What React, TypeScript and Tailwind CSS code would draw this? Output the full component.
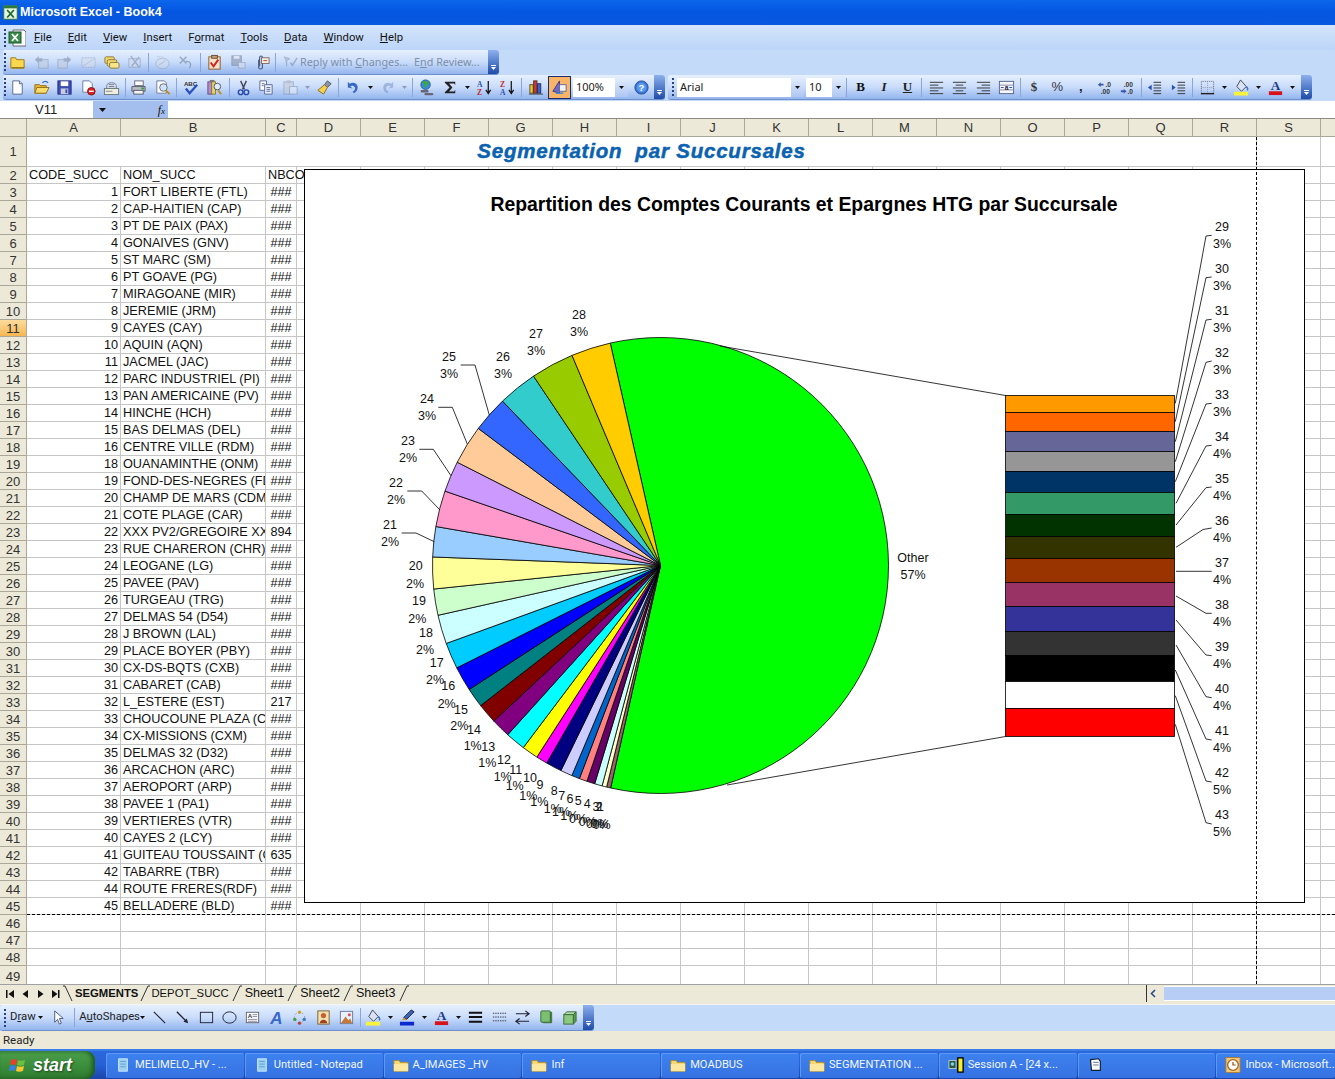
import React from "react";

const T = "font-['Noto_Sans',sans-serif]";
const R2 = "font-['Roboto',sans-serif]";

const icons: Record<string, React.ReactNode> = {
  folder: <><path d="M2 4h5l1 2h8v9H2z" fill="#f9d84e" stroke="#9a7a18" /><path d="M3 14h13v1H3z" fill="#8a6a10" /></>,
  reply: <g opacity=".6"><rect x="6" y="6" width="10" height="9" fill="#c3cde0" stroke="#8c9ab5" /><path d="M2 6l4-4v2.500h4v3.500H6v2z" fill="#7f8fae" /></g>,
  fwd: <g opacity=".6"><rect x="2" y="6" width="10" height="9" fill="#c3cde0" stroke="#8c9ab5" /><path d="M16 6l-4-4v2.500H8V8h4v2z" fill="#7f8fae" /></g>,
  mailg: <g opacity=".55"><rect x="2" y="4" width="14" height="10" fill="#d5dcea" stroke="#8c9ab5" strokeDasharray="2 1" /><path d="M3 13L15 5" stroke="#a5b0c5" /></g>,
  stack: <><rect x="2" y="3" width="10" height="7" rx="1.500" fill="#f3d76a" stroke="#8a7a40" /><rect x="4.500" y="6" width="10" height="7" rx="1.500" fill="#f3d76a" stroke="#8a7a40" /><rect x="7" y="9" width="10" height="6" rx="1.500" fill="#f7e48a" stroke="#8a7a40" /></>,
  xdoc: <g opacity=".6"><rect x="3" y="5" width="12" height="9" fill="#d5dcea" stroke="#8c9ab5" /><path d="M5 2l9 12M14 3L6 13" stroke="#7f8fae" strokeWidth="1.500" /></g>,
  circleg: <g opacity=".5"><path d="M3 3h8" stroke="#8c9ab5" strokeDasharray="1 1" /><ellipse cx="9" cy="10" rx="7" ry="5.500" fill="#d5dcea" stroke="#8c9ab5" /><path d="M5 12l7-5" stroke="#8c9ab5" /></g>,
  xarrow: <g opacity=".55"><path d="M3 3l7 7M10 3l-7 7" stroke="#6a7a9a" strokeWidth="1.600" /><path d="M9 8c5-1 7 3 4 7" fill="none" stroke="#6a7a9a" strokeWidth="1.300" /></g>,
  clip: <><rect x="3" y="3" width="12" height="13" fill="#f3e3c8" stroke="#8a5a30" /><rect x="6" y="1.500" width="6" height="3" fill="#c8a070" stroke="#6a4a30" /><path d="M5 9l3 4 5-7" fill="none" stroke="#d02020" strokeWidth="2" /></>,
  saveg: <g opacity=".6"><rect x="2" y="2" width="10" height="10" fill="#8a94ab" stroke="#6a7a9a" /><rect x="4" y="2" width="6" height="3" fill="#e4e8f0" /><rect x="9" y="9" width="7" height="6" fill="#d5dcea" stroke="#8c9ab5" /></g>,
  pclip: <><path d="M6 6v8c0 2.500 4 2.500 4 0V4C10 1.500 7 1.500 7 4v9" fill="none" stroke="#4a5a7a" strokeWidth="1.200" /><rect x="9" y="4" width="8" height="6" fill="#f5f2e0" stroke="#7a6a6a" /><path d="M11 7h4" stroke="#d03030" /></>,
  flag: <g opacity=".6"><path d="M2 3l6 2-3 2v6" fill="#a5b0c5" stroke="#7f8fae" /><path d="M9 9l2 3 5-8" fill="none" stroke="#7f8fae" strokeWidth="1.500" /></g>,
  newdoc: <><path d="M4 2h7l3 3v11H4z" fill="#fff" stroke="#55688f" /><path d="M11 2v3h3" fill="#dde" stroke="#55688f" /></>,
  open: <><path d="M2 6h5l1 1h6v8H2z" fill="#e8b830" stroke="#94701a" /><path d="M4 9h13l-3 6H2z" fill="#f9dc70" stroke="#94701a" /><path d="M10 4c2-2 4-2 6 0" fill="none" stroke="#3a6ac8" strokeWidth="1.300" /></>,
  save: <><rect x="2" y="2" width="14" height="14" fill="#3d4db0" stroke="#232f80" /><rect x="5" y="2.500" width="8" height="5" fill="#fff" /><rect x="5" y="10" width="8" height="6" fill="#c8cce0" /><rect x="10" y="11" width="2" height="4" fill="#3d4db0" /></>,
  perm: <><path d="M3 2h7l3 3v9H3z" fill="#fff" stroke="#6a7a9a" /><circle cx="12" cy="13" r="4" fill="#d22" stroke="#811" /><path d="M9.500 13h5" stroke="#fff" strokeWidth="1.500" /></>,
  email: <><path d="M4 7c0-4 10-4 10 0v3H4z" fill="#e4e8f0" stroke="#6a7a9a" /><path d="M6 6h6M6 8h6" stroke="#6a7a9a" /><rect x="1.500" y="10" width="15" height="6.500" fill="#f0ece0" stroke="#6a7a7a" /><path d="M3 13h7" stroke="#888" /></>,
  print: <><rect x="5" y="2" width="9" height="5" fill="#fff" stroke="#6a6a7a" /><path d="M2 8h14v5H2z" fill="#b8bcc8" stroke="#5a5a6a" /><rect x="12" y="9" width="3" height="2" fill="#3aa040" /><rect x="4" y="12" width="10" height="4" fill="#f5f5f5" stroke="#5a5a6a" /></>,
  prev: <><path d="M3 2h8l2 2v11H3z" fill="#fff" stroke="#6a7a9a" /><circle cx="10" cy="9" r="4" fill="#cfe3ff" stroke="#6a6a6a" /><path d="M12.500 12l4 4" stroke="#c08820" strokeWidth="2" /></>,
  spell: <><text x="1" y="7" fontSize="6.500" fontWeight="bold" fontFamily="Liberation Sans" fill="#333">ABC</text><path d="M3 10l4 5 8-9" fill="none" stroke="#2a50c0" strokeWidth="2.400" /></>,
  research: <><rect x="2" y="3" width="4" height="13" fill="#b48ad0" stroke="#6a4a8a" /><rect x="6" y="3" width="4" height="13" fill="#e6d56a" stroke="#8a7a30" /><circle cx="12" cy="8" r="3.500" fill="#dfeeff" stroke="#555" /><path d="M13 12l3 4" stroke="#c09020" strokeWidth="2" /><rect x="4" y="1" width="5" height="2" fill="#777" /></>,
  cut: <><path d="M6 2l4 9M12 2L8 11" stroke="#445" strokeWidth="1.500" /><circle cx="6" cy="14" r="2.500" fill="none" stroke="#2848a8" strokeWidth="1.500" /><circle cx="12" cy="14" r="2.500" fill="none" stroke="#2848a8" strokeWidth="1.500" /></>,
  copy: <><path d="M2 2h7v10H2z" fill="#fff" stroke="#5a6a9a" /><path d="M7 6h8v10H7z" fill="#e8eefc" stroke="#5a6a9a" /><path d="M9 9h4M9 11h4M9 13h4M4 5h3M4 7h2" stroke="#5a6a9a" /></>,
  paste: <g opacity=".55"><rect x="2" y="3" width="10" height="13" fill="#c7cbd5" stroke="#7f8fae" /><rect x="5" y="1.500" width="4" height="3" fill="#9aa3b8" /><rect x="8" y="8" width="8" height="8" fill="#e8edf6" stroke="#7f8fae" /></g>,
  brush: <><path d="M12 2l4 3-4 4-3-3z" fill="#8a94ab" stroke="#556" /><path d="M9 6l3 3-4 7-6-4z" fill="#f5cf4f" stroke="#8a7020" /></>,
  undo: <path d="M3 9V3l2 2c5-3 10 1 8 6-.6 2-2 3-3.500 4l-1.500-1.500c2-1 3-2.500 2.500-4.500-.8-2-3.500-2.500-5-1.200L8 10z" fill="#3668c8" />,
  redo: <g opacity=".35"><path d="M15 9V3l-2 2C8 2 3 6 5 11c.6 2 2 3 3.500 4l1.500-1.500c-2-1-3-2.500-2.500-4.500.8-2 3.500-2.500 5-1.200L10 10z" fill="#4a6aa8" /></g>,
  link: <><circle cx="8" cy="6" r="5" fill="#3a8ad8" stroke="#2a5a90" /><path d="M4 4c2 0 3 2 2 4s3 1 3-1 3-1 3-3c-2-2-5-3-8 0z" fill="#3aa848" /><path d="M4 13h6M8 16h7" stroke="#667" strokeWidth="2.500" strokeLinecap="round" /></>,
  sigma: <path d="M3 3h11v3.500l-1-1.800H7.500L11 9l-3.500 4.200H13l1-1.800V15H3v-1l5-5-5-5z" fill="#222" />,
  az: <><text x="1" y="8" fontSize="8" fontWeight="bold" fontFamily="Liberation Serif" fill="#2c52b0">A</text><text x="1" y="16.500" fontSize="8" fontWeight="bold" fontFamily="Liberation Serif" fill="#c02828">Z</text><path d="M13 2v12M10.500 11.500l2.500 4 2.500-4" fill="none" stroke="#111" strokeWidth="1.300" /></>,
  za: <><text x="1" y="8" fontSize="8" fontWeight="bold" fontFamily="Liberation Serif" fill="#c02828">Z</text><text x="1" y="16.500" fontSize="8" fontWeight="bold" fontFamily="Liberation Serif" fill="#2c52b0">A</text><path d="M13 2v12M10.500 11.500l2.500 4 2.500-4" fill="none" stroke="#111" strokeWidth="1.300" /></>,
  chart: <><rect x="2" y="6" width="3.500" height="9" fill="#e8c830" stroke="#5a5030" /><rect x="6" y="2" width="3.500" height="13" fill="#cc3a30" stroke="#5a2a20" /><rect x="10" y="5" width="3.500" height="10" fill="#4060c0" stroke="#203070" /><path d="M1 16h15" stroke="#444" /></>,
  drawsel: <><path d="M2 13L9 2v13z" fill="#7068c8" stroke="#403a88" /><rect x="9" y="6" width="7" height="7" fill="#f3f3f8" stroke="#6a6a8a" /><path d="M5 15h8" stroke="#3a8ad8" strokeWidth="1.500" /></>,
  help: <><circle cx="9" cy="9" r="7" fill="#3a78d8" stroke="#2a4f9a" /><circle cx="9" cy="9" r="5" fill="#5c9af0" /><text x="9" y="12.500" textAnchor="middle" fontSize="10" fontWeight="bold" fontFamily="Liberation Sans" fill="#fff">?</text></>,
  al: <path d="M2 3.500h14M2 6.500h9M2 9.500h14M2 12.500h9M2 15.500h14" stroke="#333" />,
  ac: <path d="M2 3.500h14M5 6.500h8M2 9.500h14M5 12.500h8M2 15.500h14" stroke="#333" />,
  ar: <path d="M2 3.500h14M7 6.500h9M2 9.500h14M7 12.500h9M2 15.500h14" stroke="#333" />,
  merge: <><rect x="1.500" y="2.500" width="15" height="13" fill="#f5f7fc" stroke="#55688f" /><path d="M1.500 6.500h15M1.500 11.500h15" stroke="#88a" /><text x="9" y="12" textAnchor="middle" fontSize="7" fontWeight="bold" fontFamily="Liberation Sans" fill="#223">a</text><path d="M3 9h3M12 9h3" stroke="#2a4fa8" /></>,
  incd: <><path d="M2 6l3-2.500V5h3v2H5v1.500z" fill="#3a5aa8" /><text x="10" y="8" fontSize="7" fontWeight="bold" fontFamily="Liberation Sans" fill="#333">.0</text><text x="5" y="16" fontSize="7" fontWeight="bold" fontFamily="Liberation Sans" fill="#333">.00</text></>,
  decd: <><text x="5" y="8" fontSize="7" fontWeight="bold" fontFamily="Liberation Sans" fill="#333">.00</text><path d="M8 13l-3-2.500V12H2v2h3v1.500z" fill="#3a5aa8" /><text x="9" y="16" fontSize="7" fontWeight="bold" fontFamily="Liberation Sans" fill="#333">.0</text></>,
  outd: <><path d="M8 3.500h8M8 6.500h8M8 9.500h8M8 12.500h8M8 15.500h8" stroke="#333" /><path d="M6 6v6L2 9z" fill="#2a50b0" /></>,
  ind: <><path d="M8 3.500h8M8 6.500h8M8 9.500h8M8 12.500h8M8 15.500h8" stroke="#333" /><path d="M2 6v6l4-3z" fill="#2a50b0" /></>,
  border: <><rect x="2.500" y="2.500" width="13" height="13" fill="none" stroke="#667" strokeDasharray="1 1" /><path d="M2.500 9h13M9 2.500v13" stroke="#99a" strokeDasharray="1 1" /><path d="M2 15.500h14" stroke="#222" strokeWidth="1.500" /></>,
  fill: <><path d="M8 1l6 7-5 5-5-5z" fill="#d9e3f5" stroke="#445" /><path d="M14 8c2 2 2 3 1 4" stroke="#3a70c0" fill="none" strokeWidth="1.500" /><rect x="1" y="13.500" width="15" height="4" fill="#f7f33a" /></>,
  fcolor: <><text x="9" y="12" textAnchor="middle" fontSize="14" fontWeight="bold" fontFamily="Liberation Serif" fill="#1d3a8a">A</text><rect x="2" y="13" width="14" height="4" fill="#d8121a" /></>,
  lcolor: <><path d="M13 1l3 2-8 8-3-2z" fill="#3a66c0" stroke="#223" /><path d="M3 12l2-3 3 2z" fill="#d09030" /><rect x="1" y="13.500" width="15" height="4" fill="#0a2ad0" /></>,
  cursor: <path d="M5 2v12l3-3 2 5 2-1-2-5h4z" fill="#fff" stroke="#4a5a7a" />,
  line: <path d="M3 3l12 12" stroke="#223" strokeWidth="1.200" />,
  arrowl: <><path d="M3 3l10 10" stroke="#223" strokeWidth="1.400" /><path d="M15 15l-5-1.500 3.500-3.500z" fill="#223" /></>,
  rect: <rect x="2.500" y="3.500" width="13" height="11" fill="none" stroke="#223" />,
  oval: <ellipse cx="9" cy="9" rx="7" ry="6" fill="none" stroke="#223" />,
  textbox: <><rect x="2.500" y="3.500" width="13" height="11" fill="#fff" stroke="#667" /><text x="4" y="10" fontSize="6.500" fontWeight="bold" fontFamily="Liberation Sans" fill="#334">A</text><path d="M9 6h5M9 8h5M4 11h10M4 13h10" stroke="#889" /></>,
  wordart: <text x="9" y="16" textAnchor="middle" fontSize="18" fontWeight="bold" fontStyle="italic" fontFamily="Liberation Sans" fill="#3a68c8">A</text>,
  diagram: <><circle cx="9" cy="9" r="5.500" fill="none" stroke="#99a" strokeDasharray="2 2" /><circle cx="9" cy="3.500" r="1.800" fill="#c8a030" /><circle cx="14" cy="11" r="1.800" fill="#3a78c8" /><circle cx="4" cy="11" r="1.800" fill="#4a9a48" /><circle cx="9" cy="15" r="1.800" fill="#b84040" /></>,
  clipart: <><rect x="3" y="2" width="12" height="14" fill="#f2e2b0" stroke="#7a6030" /><circle cx="9" cy="7" r="2.800" fill="#c86030" /><path d="M5 15c0-5 8-5 8 0z" fill="#a04020" /></>,
  picture: <><rect x="2.500" y="2.500" width="13" height="13" fill="#e8f0fa" stroke="#6a7a9a" /><path d="M3 15l5-7 3 4 2-2 2 5z" fill="#c87838" /><circle cx="12" cy="6" r="1.600" fill="#e05050" /></>,
  lstyle: <path d="M2 4h14M2 8.500h14M2 13.500h14" stroke="#111" strokeWidth="2.200" />,
  dash: <path d="M2 4.500h14M2 8.500h14M2 12.500h14" stroke="#334" strokeDasharray="1.500 1" />,
  arrowst: <path d="M2 5h13M12 2l4 3-4 3M16 13H3M6 10l-4 3 4 3" fill="none" stroke="#223" strokeWidth="1.200" />,
  shadow: <><rect x="5" y="3" width="10" height="12" rx="1" fill="#4a7a4a" /><rect x="3" y="2" width="10" height="12" rx="1" fill="#7ac070" stroke="#3a6a3a" /></>,
  box3d: <><path d="M3 6l3-3h10l-3 3z" fill="#b8dca8" stroke="#3a6a3a" /><path d="M13 6l3-3v10l-3 3z" fill="#5a9a50" stroke="#3a6a3a" /><rect x="3" y="6" width="10" height="10" fill="#8cc880" stroke="#3a6a3a" /></>,
  xlsmall: <><rect x="1" y="1" width="16" height="16" fill="#e8f6e0" stroke="#2e7a3a" /><rect x="1" y="1" width="16" height="3" fill="#2e7a3a" /><path d="M5 6l8 9M13 6l-8 9" stroke="#1d6a30" strokeWidth="2.200" /></>,
  xlmenu: <><path d="M5 1h11l2 2v14H5z" fill="#fff" stroke="#667" /><rect x="1" y="3" width="12" height="11" fill="#3a8a4a" stroke="#1a5a2a" /><path d="M4 5l6 7M10 5l-6 7" stroke="#fff" strokeWidth="1.800" /></>,
  notepad: <><path d="M4 2h10v14H4z" fill="#9bd0f0" stroke="#cfe8ff" /><path d="M6 5h6M6 8h6M6 11h6" stroke="#5a9ad0" /></>,
  foldert: <><path d="M1 4h6l1 2h9v10H1z" fill="#f8d873" stroke="#a98a30" /><path d="M1 8h16v8H1z" fill="#fbe8a0" /></>,
  session: <><rect x="1" y="4" width="8" height="9" fill="#2a5a3a" stroke="#bcd" /><circle cx="5" cy="8" r="2" fill="#7ad0f0" /><rect x="11" y="1" width="6" height="16" fill="#f5ee30" stroke="#000" strokeWidth="1.500" /></>,
  blank: <><path d="M4 3l9-1 2 3v10H5z" fill="#fff" stroke="#123" strokeWidth="1.300" /><path d="M7 6h6M7 9h6" stroke="#567" /></>,
  inbox: <><rect x="1" y="0.500" width="16" height="17" rx="1" fill="#f0c878" stroke="#a87830" /><circle cx="9" cy="9" r="6" fill="#fff" stroke="#a86820" strokeWidth="1.500" /><path d="M9 5.500V9h3" fill="none" stroke="#a05010" strokeWidth="1.400" /></>,
};

const Ic = ({ n, s = 18 }: { n: string; s?: number }) => (
  <svg width={s} height={s} viewBox="0 0 18 18" className="shrink-0">{icons[n]}</svg>
);

const Tool = ({ n }: { n: string }) => (
  <div className="flex h-full w-[23.4px] shrink-0 items-center justify-center"><Ic n={n} s={17} /></div>
);
const Tx = ({ c, cn = "" }: { c: string; cn?: string }) => (
  <div className={`flex h-full w-[23.4px] shrink-0 items-center justify-center text-[13px] ${cn}`}>{c}</div>
);
const Sep = ({ narrow }: { narrow?: boolean }) => (
  <div className={`flex h-full shrink-0 items-center justify-center ${narrow ? "w-[4px]" : "w-[5.500px]"}`}><div className="h-[19px] w-px bg-[#8aa6d8]" /></div>
);
const Arr = ({ g }: { g?: boolean }) => (
  <div className="flex h-full w-[10.600px] shrink-0 items-center justify-center">
    <svg width="5" height="3" viewBox="0 0 5 3"><path d="M0 0h5L2.500 3z" fill={g ? "#8b9cb8" : "#111"} /></svg>
  </div>
);
const Grip = () => (
  <div className="flex h-full w-[3.300px] shrink-0 flex-col items-center justify-center gap-[2px]">
    {[0, 1, 2, 3, 4].map((i) => <div key={i} className="h-[2px] w-[2px] bg-[#27417a]" />)}
  </div>
);
const Chev = () => (
  <div className="flex h-full w-[11px] shrink-0 flex-col items-center justify-end rounded-r-[3px] bg-linear-to-b from-[#8db0ee] to-[#1f4ca8] pb-[4px]">
    <div className="mb-[1px] h-px w-[5px] bg-white" />
    <svg width="5" height="3" viewBox="0 0 5 3"><path d="M0 0h5L2.500 3z" fill="#fff" /></svg>
  </div>
);
const bandCls = "flex items-center rounded-[3px] border-b border-[#6f8fcb] bg-linear-to-b from-[#e6f0fe] via-[#c9dcfa] to-[#94b5ee]";

const Combo = ({ w, text, arrowW = 13 }: { w: string; text: string; arrowW?: number }) => (
  <div className={`flex h-[19px] shrink-0 items-center justify-between bg-white pl-[3px] text-[11px] text-[#222] ${w} ${T}`}>
    <span>{text}</span>
    <div style={{ width: arrowW }} className="flex h-full items-center justify-center bg-linear-to-b from-[#e2ecfd] to-[#adc6f2]">
      <svg width="5" height="3" viewBox="0 0 5 3"><path d="M0 0h5L2.500 3z" fill="#111" /></svg>
    </div>
  </div>
);

const MENU = [
  ["F", "ile"], ["E", "dit"], ["V", "iew"], ["I", "nsert"], ["", "Format"], ["T", "ools"], ["D", "ata"], ["W", "indow"], ["H", "elp"],
];

const rowsData: [string, string, string][] = [
  ["1", "FORT LIBERTE (FTL)", "###"], ["2", "CAP-HAITIEN (CAP)", "###"], ["3", "PT DE PAIX (PAX)", "###"], ["4", "GONAIVES (GNV)", "###"],
  ["5", "ST MARC (SM)", "###"], ["6", "PT GOAVE (PG)", "###"], ["7", "MIRAGOANE (MIR)", "###"], ["8", "JEREMIE (JRM)", "###"],
  ["9", "CAYES (CAY)", "###"], ["10", "AQUIN (AQN)", "###"], ["11", "JACMEL (JAC)", "###"], ["12", "PARC INDUSTRIEL (PI)", "###"],
  ["13", "PAN AMERICAINE (PV)", "###"], ["14", "HINCHE (HCH)", "###"], ["15", "BAS DELMAS (DEL)", "###"], ["16", "CENTRE VILLE (RDM)", "###"],
  ["18", "OUANAMINTHE (ONM)", "###"], ["19", "FOND-DES-NEGRES (FDN)", "###"], ["20", "CHAMP DE MARS (CDM)", "###"], ["21", "COTE PLAGE (CAR)", "###"],
  ["22", "XXX PV2/GREGOIRE XXX", "894"], ["23", "RUE CHARERON (CHR)", "###"], ["24", "LEOGANE (LG)", "###"], ["25", "PAVEE (PAV)", "###"],
  ["26", "TURGEAU (TRG)", "###"], ["27", "DELMAS 54 (D54)", "###"], ["28", "J BROWN (LAL)", "###"], ["29", "PLACE BOYER (PBY)", "###"],
  ["30", "CX-DS-BQTS (CXB)", "###"], ["31", "CABARET (CAB)", "###"], ["32", "L_ESTERE (EST)", "217"], ["33", "CHOUCOUNE PLAZA (CHP)", "###"],
  ["34", "CX-MISSIONS (CXM)", "###"], ["35", "DELMAS 32 (D32)", "###"], ["36", "ARCACHON (ARC)", "###"], ["37", "AEROPORT (ARP)", "###"],
  ["38", "PAVEE 1 (PA1)", "###"], ["39", "VERTIERES (VTR)", "###"], ["40", "CAYES 2 (LCY)", "###"], ["41", "GUITEAU TOUSSAINT (GTS)", "635"],
  ["42", "TABARRE (TBR)", "###"], ["44", "ROUTE FRERES(RDF)", "###"], ["45", "BELLADERE (BLD)", "###"],
];

const LETTERS = "DEFGHIJKLMNOPQRS".split("");
const hdr = "flex items-center justify-center border-r border-b border-[#aca899] bg-[#ece9d8] pt-px text-[13px] text-[#333]";
const cell = "overflow-hidden whitespace-nowrap border-r border-b border-[#c6c6c6] text-[12.700px] leading-[17px] text-[#111]";

const emptyCells = (k: number) => LETTERS.concat("T").map((l) => <div key={k + l} className={cell} />);

const Sheet = () => {
  const rows: React.ReactNode[] = [];
  for (const [i, r] of rowsData.entries()) {
    const n = i + 3;
    rows.push(
      <div key={"h" + n} className={n === 11 ? "flex items-center justify-center border-r border-b border-[#aca899] bg-linear-to-b from-[#fcdc9c] to-[#f6b650] pt-px text-[13px] text-[#333]" : hdr}>{n}</div>,
      <div key={"a" + n} className={`${cell} pr-[2px] text-right`}>{r[0]}</div>,
      <div key={"b" + n} className={`${cell} pl-[2px]`}>{r[1]}</div>,
      <div key={"c" + n} className={`${cell} text-center`}>{r[2]}</div>,
      ...emptyCells(n),
    );
  }
  for (const n of [46, 47, 48, 49]) {
    rows.push(
      <div key={"h" + n} className={hdr}>{n}</div>,
      <div key={"a" + n} className={cell} />, <div key={"b" + n} className={cell} />, <div key={"c" + n} className={cell} />,
      ...emptyCells(n),
    );
  }
  return (
    <div className="grid h-full grid-cols-[27px_94px_145px_31px_repeat(17,64px)] grid-rows-[18px_30px_repeat(47,17px)]">
      <div className={hdr} />
      {["A", "B", "C"].concat(LETTERS).map((l) => <div key={l} className={hdr}>{l}</div>)}
      <div className={hdr} />
      <div className={hdr}>1</div>
      <div className="col-span-18 flex items-center justify-center border-r border-b border-[#c6c6c6]">
        <span className="whitespace-pre text-[20.500px] font-bold italic tracking-[0.800px] text-[#0a62b0] [-webkit-text-stroke:0.5px_#0a62b0]">Segmentation  par Succursales</span>
      </div>
      <div className={cell} /><div className={cell} />
      <div className={hdr}>2</div>
      <div className={`${cell} pl-[2px]`}>CODE_SUCC</div>
      <div className={`${cell} pl-[2px]`}>NOM_SUCC</div>
      <div className="whitespace-nowrap border-r border-b border-[#c6c6c6] pl-[2px] text-[12.700px] leading-[17px] text-[#111]">NBCO</div>
      {emptyCells(2)}
      {rows}
    </div>
  );
};

const CX = 660.5;
const CY = 565.5;
const R = 228;
const boundaries: [number, number][] = [
  [610.7, 345], [573, 357.7], [535, 378.3], [504.3, 403], [480, 429.7], [459.3, 463.3], [446.7, 491.7], [437, 526.7], [433.3, 557],
  [434.3, 589], [439.3, 615], [448.3, 642.7], [459, 666.7], [471, 688.3], [482.3, 704.3], [495.7, 719.3], [509, 733.3], [524, 746.7],
  [537.7, 755.7], [547.7, 761.3], [561.7, 769], [572.7, 773.5], [580, 777], [587.3, 780], [595, 782.8], [602.3, 785], [606.7, 786.7], [610.7, 787.8],
];
const sliceColors = [
  "#ffcc00", "#99cc00", "#33cccc", "#3366ff", "#ffcc99", "#cc99ff", "#ff99cc", "#99ccff", "#ffff99", "#ccffcc", "#ccffff", "#00ccff", "#0000ff",
  "#008080", "#800000", "#800080", "#00ffff", "#ffff00", "#ff00ff", "#000080", "#ccccff", "#0066cc", "#ff8080", "#660066", "#ccffff", "#ffffcc", "#996666",
];
const onCircle = ([x, y]: [number, number]) => {
  const a = Math.atan2(y - CY, x - CX);
  return [CX + R * Math.cos(a), CY + R * Math.sin(a)];
};
const pts = boundaries.map(onCircle);
const f = (v: number) => v.toFixed(2);

const barSegs: [number, number, string][] = [
  [395.5, 412.5, "#ff9900"], [412.5, 431.5, "#ff6600"], [431.5, 451.5, "#666699"], [451.5, 471.5, "#969696"], [471.5, 492.5, "#003366"],
  [492.5, 514.5, "#339966"], [514.5, 536.5, "#003300"], [536.5, 558.5, "#333300"], [558.5, 582.5, "#993300"], [582.5, 606.5, "#993366"],
  [606.5, 631.5, "#333399"], [631.5, 655.5, "#333333"], [655.5, 681.5, "#000000"], [681.5, 708.5, "#ffffff"], [708.5, 736.5, "#ff0000"],
];

const leadersR: number[][] = [
  [1175.3, 403.3, 1206, 236, 1211.7, 235.3], [1175.3, 421.7, 1206, 277.7, 1211.7, 277], [1175.3, 441.7, 1206, 320, 1211.7, 319.3],
  [1175.3, 461.7, 1206, 362.3, 1211.7, 361], [1175.3, 481.7, 1206, 404, 1211.7, 403.3], [1176, 503.3, 1206, 446, 1211.7, 445.3],
  [1176, 525, 1206, 487.7, 1211.7, 487], [1176, 547.3, 1203, 529.5, 1211.7, 528], [1176, 571.3, 1211.7, 571.3], [1176, 596, 1206, 613.3, 1211.7, 613.3],
  [1176, 620, 1206, 655, 1211.7, 655.7], [1176, 645, 1206, 696.7, 1211.7, 697.7], [1175.3, 670, 1206, 739, 1211.7, 740], [1175.3, 695.7, 1206, 781, 1211.7, 782],
  [1175.3, 724.3, 1206, 822.7, 1211.7, 824],
];
const leadersL: number[][] = [
  [460.7, 365, 475, 365, 489.3, 415], [438.3, 407.3, 452.3, 407.3, 467.3, 444], [419.3, 449.3, 433.3, 449.3, 451, 475.7],
  [407.3, 491, 421.7, 491, 440, 510], [401.7, 533, 416, 533, 434.3, 541.7],
];
const rightPct = ["3%", "3%", "3%", "3%", "3%", "4%", "4%", "4%", "4%", "4%", "4%", "4%", "4%", "5%", "5%"];
const labels: [string, number, number, string, number, number][] = [
  ["28", 579, 314, "3%", 579, 331], ["27", 536, 333, "3%", 536, 350], ["26", 503, 356, "3%", 503, 373], ["25", 449, 356, "3%", 449, 373],
  ["24", 427, 398, "3%", 427, 415], ["23", 408, 440, "2%", 408, 457], ["22", 396, 482, "2%", 396, 499], ["21", 390, 524, "2%", 390, 541],
  ["20", 415.7, 565.7, "2%", 415, 583.3], ["19", 419, 600.7, "2%", 417.3, 618.3], ["18", 426, 632, "2%", 425, 649.3], ["17", 436.7, 662, "2%", 435, 679.3],
  ["16", 448.3, 685.7, "2%", 446.7, 703.3], ["15", 461, 709, "2%", 459.3, 725.7], ["14", 474, 729.3, "1%", 472.7, 745.7], ["13", 488.3, 746, "1%", 487.3, 762.7],
  ["12", 504, 759, "1%", 502.7, 776], ["11", 515.7, 769, "1%", 514.7, 785.7], ["10", 530, 777.7, "1%", 528.3, 795], ["9", 540, 784, "1%", 539.3, 801],
  ["8", 554.3, 790.7, "1%", 552.7, 808.3], ["7", 561.7, 795, "1%", 561, 811.7], ["6", 570, 798.3, "1%", 569.3, 815], ["5", 578.3, 800, "0%", 578, 818],
  ["4", 587.3, 803, "0%", 587.7, 821.7], ["3", 596, 806, "0%", 595, 823.3], ["2", 599.3, 806, "0%", 599.3, 823.3], ["1", 600.5, 806, "0%", 601.7, 824],
];

const ChartText = ({ x, y, t }: { x: number; y: number; t: string }) => (
  <text x={x} y={y + 0.7} textAnchor="middle" dominantBaseline="central" fontSize="12.500" fill="#111" fontFamily="Liberation Sans">{t}</text>
);

const Chart = () => (
  <div className="absolute left-[304px] top-[50px] h-[734px] w-[1001px] border border-black bg-white">
    <svg width="999" height="732" viewBox="305 170 999 732" className="block">
      <text x="804" y="204" textAnchor="middle" dominantBaseline="central" fontSize="19.400" fontWeight="bold" fill="#000" fontFamily="Liberation Sans">
        Repartition des Comptes Courants et Epargnes HTG par Succursale
      </text>
      <path d={`M${CX} ${CY}L${f(pts[0][0])} ${f(pts[0][1])}A${R} ${R} 0 1 1 ${f(pts[27][0])} ${f(pts[27][1])}Z`} fill="#00ff00" stroke="#000" strokeWidth="0.800" />
      {sliceColors.map((c, i) => {
        const from = pts[27 - i];
        const to = pts[27 - i - 1];
        const col = sliceColors[26 - i];
        return <path key={c + i} d={`M${CX} ${CY}L${f(from[0])} ${f(from[1])}A${R} ${R} 0 0 1 ${f(to[0])} ${f(to[1])}Z`} fill={col} stroke="#000" strokeWidth="0.800" />;
      })}
      <path d="M720 346L1005.500 395.500M727 785L1005.500 736.500" stroke="#000" strokeWidth="0.800" fill="none" />
      {barSegs.map(([a, b, c]) => <rect key={a} x="1005.500" y={a} width="169" height={b - a} fill={c} stroke="#000" strokeWidth="0.800" />)}
      {leadersR.map((l, i) => <polyline key={i} points={l.join(" ")} fill="none" stroke="#000" strokeWidth="0.800" />)}
      {leadersL.map((l, i) => <polyline key={i} points={l.join(" ")} fill="none" stroke="#000" strokeWidth="0.800" />)}
      {rightPct.map((p, i) => (
        <g key={i}>
          <ChartText x={1222} y={226 + 42 * i} t={String(29 + i)} />
          <ChartText x={1222} y={243 + 42 * i} t={p} />
        </g>
      ))}
      {labels.map(([a, x1, y1, b, x2, y2]) => (
        <g key={a}>
          <ChartText x={x1} y={y1} t={a} />
          <ChartText x={x2} y={y2} t={b} />
        </g>
      ))}
      <ChartText x={913} y={557} t="Other" />
      <ChartText x={913} y={574} t="57%" />
    </svg>
  </div>
);

const Slash = ({ tight }: { tight?: boolean }) => (
  <svg width="10" height="17" viewBox="0 0 10 17" className={`shrink-0 ${tight ? "mx-[1.500px]" : "mx-[3px]"}`}><path d="M1 16L8 1h2" fill="none" stroke="#333" /></svg>
);
const Nav = ({ d }: { d: string }) => (
  <div className="flex w-[15px] shrink-0 items-center justify-center">
    <svg width="9" height="8" viewBox="0 0 9 8"><path d={d} fill="#111" /></svg>
  </div>
);

const TaskBtn = ({ i, t, last }: { i: string; t: string; last?: boolean }) => (
  <div className={`flex h-[25px] shrink-0 items-center gap-[4px] overflow-hidden whitespace-nowrap rounded-[2px] bg-linear-to-b from-[#3d82ee] to-[#3672e2] pl-[9px] text-[11.100px] text-[#f2f6ff] shadow-[inset_1px_1px_0_#5c98f4] ${last ? "flex-1" : "w-[137.800px]"} ${R2}`}>
    <Ic n={i} s={16} />
    <span>{t}</span>
  </div>
);

export default function App() {
  return (
    <div className="relative flex h-[1079px] w-[1335px] flex-col overflow-hidden bg-[#c3daf9] font-['Liberation_Sans',Arial,sans-serif]">
      {/* title bar */}
      <div className="flex h-[25px] shrink-0 items-center gap-[2px] bg-linear-to-b from-[#0d66ec] via-[#0455e0] to-[#0a58e0] pl-[3px]">
        <Ic n="xlsmall" s={15} />
        <span className="text-[12.500px] font-bold text-white">Microsoft Excel - Book4</span>
      </div>
      {/* menu */}
      <div className={`flex h-[25px] shrink-0 items-center bg-linear-to-b from-[#d4e4fb] to-[#bcd5f8] pl-[3px] text-[11.300px] text-[#111] ${R2}`}>
        <Grip />
        <div className="ml-[2px] mr-[7.700px] flex w-[18px] justify-center"><Ic n="xlmenu" s={18} /></div>
        <div className="flex gap-[16px] pt-[2px]">
          {MENU.map(([u, r]) =>
            u ? <span key={r}><u>{u}</u>{r}</span> : <span key={r}>F<u>o</u>rmat</span>
          )}
        </div>
      </div>
      {/* toolbar 1 */}
      <div className="flex h-[25px] shrink-0 pl-[3px]">
        <div className={`${bandCls} w-[496px]`}>
          <Grip />
          {["folder", "reply", "fwd", "mailg", "stack", "xdoc"].map((n) => <Tool key={n} n={n} />)}
          <Sep narrow />
          <Tool n="circleg" /><Tool n="xarrow" />
          <Sep />
          <Tool n="clip" /><Tool n="saveg" /><Tool n="pclip" />
          <Sep />
          <Tool n="flag" />
          <span className={`ml-[-2px] whitespace-nowrap text-[10.800px] text-[#7e8ea8] ${T}`}>Reply with <u>C</u>hanges...</span>
          <span className={`ml-[6px] whitespace-nowrap text-[10.800px] text-[#7e8ea8] ${T}`}>E<u>n</u>d Review...</span>
          <div className="flex-1" />
          <Chev />
        </div>
      </div>
      {/* toolbar 2 */}
      <div className="flex h-[25px] shrink-0 pl-[3px]">
        <div className={`${bandCls} w-[662px]`}>
          <Grip />
          <Tool n="newdoc" /><Tool n="open" /><Tool n="save" /><Tool n="perm" /><Tool n="email" />
          <Sep narrow />
          <Tool n="print" /><Tool n="prev" />
          <Sep />
          <Tool n="spell" /><Tool n="research" />
          <Sep />
          <Tool n="cut" /><Tool n="copy" /><Tool n="paste" /><Arr g /><Tool n="brush" />
          <Sep />
          <Tool n="undo" /><Arr /><Tool n="redo" /><Arr g />
          <Sep />
          <Tool n="link" /><Tool n="sigma" /><Arr /><Tool n="az" /><Tool n="za" />
          <Sep />
          <Tool n="chart" />
          <div className="flex h-[23px] w-[23px] shrink-0 items-center justify-center border border-[#1a2a6a] bg-[#f8b468]"><Ic n="drawsel" s={17} /></div>
          <div className="w-[2px] shrink-0" />
          <Combo w="w-[55px]" text="100%" />
          <div className="w-[2px] shrink-0" />
          <Tool n="help" />
          <div className="flex-1" />
          <Chev />
        </div>
        <div className="w-[3px] shrink-0" />
        <div className={`${bandCls} w-[644px] pl-[3px]`}>
          <Grip />
          <div className="w-[2.700px] shrink-0" />
          <Combo w="w-[127px]" text="Arial" />
          <div className="w-[2px] shrink-0" />
          <Combo w="w-[39px]" text="10" />
          <Sep narrow />
          <Tx c="B" cn="font-bold font-['Liberation_Serif',serif] text-[#111]" />
          <Tx c="I" cn="font-bold italic font-['Liberation_Serif',serif] text-[#222]" />
          <Tx c="U" cn="font-bold underline font-['Liberation_Serif',serif] text-[#222]" />
          <Sep />
          <Tool n="al" /><Tool n="ac" /><Tool n="ar" /><Tool n="merge" />
          <Sep narrow />
          <Tx c="$" cn="font-bold font-['Liberation_Serif',serif] text-[#333]" />
          <Tx c="%" cn="text-[#334]" />
          <Tx c="," cn="font-bold text-[#222]" />
          <Tool n="incd" /><Tool n="decd" />
          <Sep narrow />
          <Tool n="outd" /><Tool n="ind" />
          <Sep />
          <Tool n="border" /><Arr /><Tool n="fill" /><Arr /><Tool n="fcolor" /><Arr />
          <div className="flex-1" />
          <Chev />
        </div>
      </div>
      {/* formula bar */}
      <div className="mt-[1px] flex h-[17px] shrink-0 bg-white pl-px">
        <div className="flex w-[92px] shrink-0 items-center pl-[34px] text-[13px] text-[#222]">V11</div>
        <div className="relative flex w-[75px] shrink-0 items-center bg-[#a4bfee]">
          <svg width="7" height="4" viewBox="0 0 7 4" className="ml-[6px]"><path d="M0 0h7L3.500 4z" fill="#111" /></svg>
          <span className="ml-auto mr-[3px] font-['Liberation_Serif',serif] text-[12px] italic text-[#111]">f<span className="text-[9px]">x</span></span>
        </div>
      </div>
      {/* sheet */}
      <div className="relative h-[866px] shrink-0 overflow-hidden border-t border-[#8a8a80] bg-white">
        <Sheet />
        <Chart />
        <div className="absolute left-[27px] right-0 top-[795px] border-t border-dashed border-black" />
        <div className="absolute bottom-0 left-[1256px] top-[18px] w-0 border-l border-dashed border-black" />
      </div>
      {/* tabs */}
      <div className="flex h-[20px] shrink-0 items-center border-t border-[#a0a0a0] bg-[#ece9d8] pb-[2px] pl-[3px] text-[11.300px] text-[#111]">
        <Nav d="M0 0h1.500v8H0zM8 0v8L2.500 4z" />
        <Nav d="M7 0v8L1.500 4z" />
        <Nav d="M2 0v8l5.500-4z" />
        <Nav d="M1 0v8l5.500-4zM7 0h1.500v8H7z" />
        <svg width="10" height="17" viewBox="0 0 10 17" className="shrink-0"><path d="M0 1h2l7 15" fill="none" stroke="#333" /></svg>
        <span className="ml-[2px] font-bold">SEGMENTS</span>
        <Slash tight />
        <span>DEPOT_SUCC</span>
        <Slash />
        <span className="text-[12.500px]">Sheet1</span>
        <Slash />
        <span className="text-[12.500px]">Sheet2</span>
        <Slash />
        <span className="text-[12.500px]">Sheet3</span>
        <Slash />
        <div className="flex-1" />
        <div className="ml-auto h-full w-[2px] border-l border-[#333] bg-[#ece9d8]" />
        <div className="flex h-full w-[16px] items-center pl-[2px]">
          <svg width="6" height="9" viewBox="0 0 6 9"><path d="M5 1L1.500 4.500 5 8" fill="none" stroke="#2a4a8a" strokeWidth="1.600" /></svg>
        </div>
        <div className="h-[15px] w-[171px] border-y border-white bg-[#b7cdf5]" />
      </div>
      {/* draw toolbar */}
      <div className="flex h-[27px] shrink-0 border-t border-[#f5f5ee]">
        <div className={`${bandCls} w-[594px]`}>
          <div className="w-[3px] shrink-0" />
          <Grip />
          <div className="w-[3.700px] shrink-0" />
          <span className={`text-[11.300px] text-[#222] ${R2}`}>D<u>r</u>aw</span>
          <Arr />
          <div className="w-[1px] shrink-0" />
          <Tool n="cursor" />
          <div className="w-[1px] shrink-0" />
          <Sep />
          <span className={`ml-[2px] w-[58px] text-[11.300px] text-[#222] ${R2}`}>A<u>u</u>toShapes</span>
          <Arr />
          <Tool n="line" /><Tool n="arrowl" /><Tool n="rect" /><Tool n="oval" /><Tool n="textbox" /><Tool n="wordart" /><Tool n="diagram" /><Tool n="clipart" /><Tool n="picture" />
          <Sep narrow />
          <Tool n="fill" /><Arr /><Tool n="lcolor" /><Arr /><Tool n="fcolor" /><Arr />
          <Tool n="lstyle" /><Tool n="dash" /><Tool n="arrowst" /><Tool n="shadow" /><Tool n="box3d" />
          <div className="flex-1" />
          <Chev />
        </div>
      </div>
      {/* status */}
      <div className={`flex h-[18px] shrink-0 items-center bg-[#ece9d8] pl-[3px] pt-[2px] text-[11.500px] text-[#222] ${R2}`}>Ready</div>
      {/* taskbar */}
      <div className="flex h-[30px] flex-1 items-center gap-px border-t-2 border-[#3b7de8] bg-linear-to-b from-[#2c68dd] via-[#2560d8] to-[#1b45a8]">
        <div className="mr-[10px] flex h-full w-[95px] shrink-0 items-center rounded-r-[9px] bg-linear-to-b from-[#4c9e4c] via-[#3c8f3c] to-[#2f7a30] pl-[9px] shadow-[inset_-3px_0_4px_#1e5a20]">
          <svg width="18" height="18" viewBox="0 0 18 18" className="shrink-0">
            <path d="M2 4c2-1 4-1 6 0l-1 5c-2-1-4-1-6 0z" fill="#e8402a" />
            <path d="M9 4c2 1 4 1 7 0l-1 5c-3 1-5 1-7 0z" fill="#6cc040" />
            <path d="M1 10c2-1 4-1 6 0l-1 5c-2-1-4-1-6 0z" fill="#3a80e8" />
            <path d="M8 10c2 1 4 1 7 0l-1 5c-3 1-5 1-7 0z" fill="#f5c830" />
          </svg>
          <span className="ml-[6px] font-['Liberation_Sans',sans-serif] text-[18px] font-bold italic leading-none text-white [text-shadow:1px_1px_2px_#1e4a20]">start</span>
        </div>
        <TaskBtn i="notepad" t="MELIMELO_HV - ..." />
        <TaskBtn i="notepad" t="Untitled - Notepad" />
        <TaskBtn i="foldert" t="A_IMAGES _HV" />
        <TaskBtn i="foldert" t="Inf" />
        <TaskBtn i="foldert" t="MOADBUS" />
        <TaskBtn i="foldert" t="SEGMENTATION ..." />
        <TaskBtn i="session" t="Session A - [24 x..." />
        <TaskBtn i="blank" t="" />
        <TaskBtn i="inbox" t="Inbox - Microsoft..." last />
      </div>
    </div>
  );
}
